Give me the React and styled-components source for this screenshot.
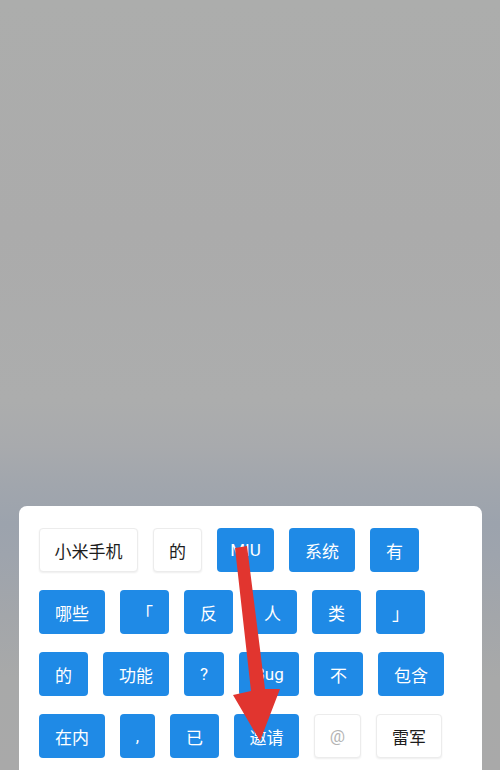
import React from "react";
import styled, { createGlobalStyle } from "styled-components";

const Global = createGlobalStyle`
  html, body { margin: 0; padding: 0; }
  body {
    width: 500px;
    height: 770px;
    overflow: hidden;
    font-family: "Roboto", "Noto Sans CJK SC", sans-serif;
  }
`;

const Page = styled.div`
  position: relative;
  width: 500px;
  height: 770px;
  overflow: hidden;
  box-sizing: border-box;
  padding: 506px 18px 0 19px;
  background: linear-gradient(
    to bottom,
    #acadac 0%,
    #ababab 30%,
    #acadad 52%,
    #a8aaad 58%,
    #a1a6ad 63%,
    #9ca3ad 68%,
    #9ea4ad 72%,
    #a3a6aa 80%,
    #a8a9a9 88%,
    #a9a9a9 100%
  );
`;

const Panel = styled.div`
  background: #ffffff;
  border-radius: 8px 8px 0 0;
  padding: 22px 20px 30px 20px;
  display: flex;
  flex-direction: column;
  gap: 18px;
  min-height: 300px;
`;

const Row = styled.div`
  display: flex;
  gap: 15px;
`;

const Chip = styled.div`
  box-sizing: border-box;
  width: ${(p) => p.$w}px;
  height: 44px;
  border-radius: 4px;
  display: flex;
  align-items: center;
  justify-content: center;
  font-size: 17px;
  white-space: nowrap;
  background: ${(p) => (p.$light ? "#ffffff" : "#1f8ae6")};
  color: ${(p) => (p.$light ? (p.$muted ? "#b4b4b4" : "#1d1d1d") : "#ffffff")};
  border: ${(p) => (p.$light ? "1px solid #ececec" : "none")};
  box-shadow: ${(p) => (p.$light ? "0 1px 2px rgba(0,0,0,0.07)" : "none")};
`;

const Arrow = styled.svg`
  position: absolute;
  left: 0;
  top: 0;
  width: 500px;
  height: 770px;
  pointer-events: none;
`;

const rows = [
  [
    { t: "小米手机", w: 99, light: true },
    { t: "的", w: 49, light: true },
    { t: "MIU", w: 57 },
    { t: "系统", w: 66 },
    { t: "有", w: 49 },
  ],
  [
    { t: "哪些", w: 66 },
    { t: "「", w: 49 },
    { t: "反", w: 49 },
    { t: "人", w: 49 },
    { t: "类", w: 49 },
    { t: "」", w: 49 },
  ],
  [
    { t: "的", w: 49 },
    { t: "功能", w: 66 },
    { t: "?", w: 40 },
    { t: "Bug", w: 60 },
    { t: "不", w: 49 },
    { t: "包含", w: 66 },
  ],
  [
    { t: "在内", w: 66 },
    { t: ",", w: 35 },
    { t: "已", w: 49 },
    { t: "邀请", w: 65 },
    { t: "@", w: 47, light: true, muted: true },
    { t: "雷军", w: 66, light: true },
  ],
];

export default function App() {
  return (
    <>
      <Global />
      <Page>
        <Panel>
          {rows.map((row, i) => (
            <Row key={i}>
              {row.map((c, j) => (
                <Chip key={j} $w={c.w} $light={c.light} $muted={c.muted}>
                  {c.t}
                </Chip>
              ))}
            </Row>
          ))}
        </Panel>
        <Arrow viewBox="0 0 500 770">
          <polygon
            points="235,548 247,546 265,689 280,689 260,741 233,695 251,691"
            fill="#e1352f"
          />
        </Arrow>
      </Page>
    </>
  );
}
